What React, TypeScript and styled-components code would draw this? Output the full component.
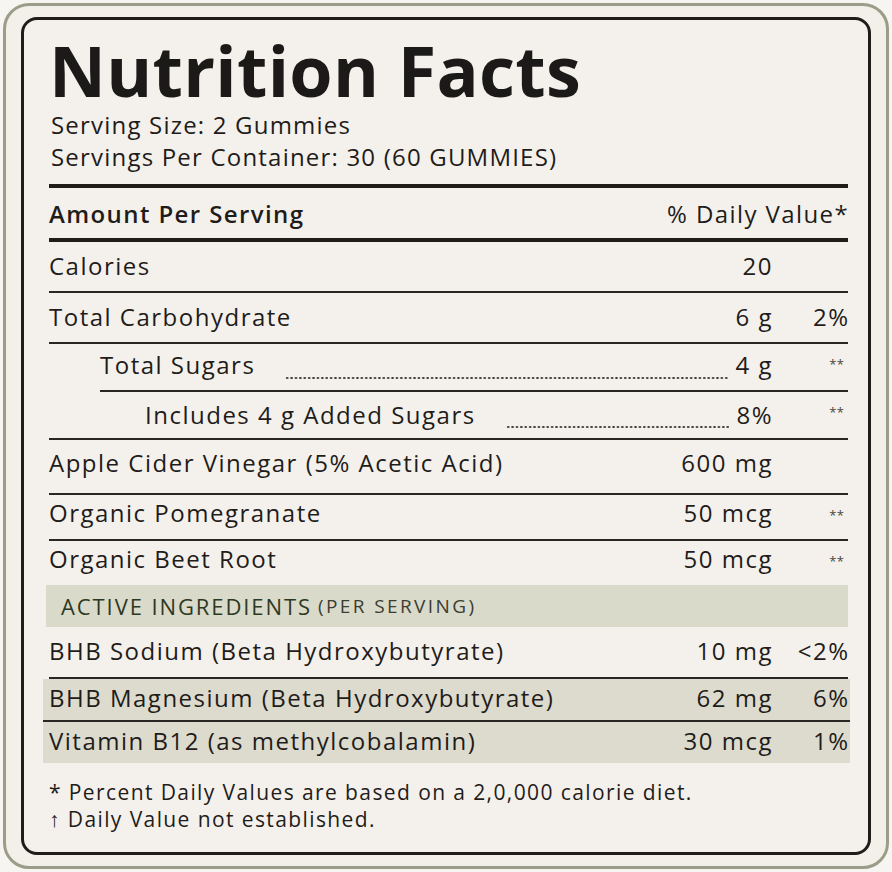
import React from "react";
import styled, { createGlobalStyle } from "styled-components";

const Global = createGlobalStyle`
  html, body { margin: 0; padding: 0; background: #f6f5f1; }
  body { font-family: "Open Sans", "Liberation Sans", sans-serif; color: #1f1c1a; }
  * { box-sizing: border-box; }
`;

const Frame = styled.div`
  margin: 3px;
  width: 886px;
  height: 866px;
  border: 3px solid #9c9d88;
  border-radius: 26px;
  background: #f3f0ea;
  padding: 11px 15px;
`;

const Card = styled.div`
  height: 100%;
  border: 3px solid #1f1c1a;
  border-radius: 16px;
  background: #f4f1ec;
  padding: 0 20px 0 25px;
  display: flex;
  flex-direction: column;
`;

const Title = styled.h1`
  margin: 14px 0 3px 0;
  font-size: 70px;
  line-height: 72px;
  font-weight: 700;
  letter-spacing: 0.3px;
  color: #1c1a18;
`;

const Serving = styled.div`
  font-size: 24px;
  line-height: 32px;
  font-weight: 400;
  letter-spacing: 1.2px;
  padding-left: 2px;
`;

const Rule = styled.div<{ $thick?: boolean; $top?: number }>`
  height: ${(p) => (p.$thick ? 4 : 2)}px;
  background: #1f1c1a;
  margin-top: ${(p) => p.$top ?? 0}px;
`;

const HeadRow = styled.div`
  height: 50px;
  display: flex;
  align-items: center;
  justify-content: space-between;
  font-size: 24px;
  letter-spacing: 1.4px;
`;

const HeadLeft = styled.span`
  font-weight: 600;
`;

const HeadRight = styled.span`
  font-weight: 500;
  margin-right: -1px;
`;

const Row = styled.div<{
  $h: number;
  $pb: number;
  $line?: boolean;
  $inset?: number;
  $shade?: boolean;
}>`
  height: ${(p) => p.$h}px;
  margin-left: ${(p) => (p.$shade ? -6 : p.$inset ?? 0)}px;
  margin-right: ${(p) => (p.$shade ? -2 : 0)}px;
  padding-left: ${(p) => (p.$shade ? 6 : 0)}px;
  padding-right: ${(p) => (p.$shade ? 2 : 0)}px;
  padding-bottom: ${(p) => p.$pb}px;
  display: flex;
  align-items: center;
  font-size: 24px;
  font-weight: 500;
  letter-spacing: 1.5px;
  border-bottom: ${(p) => (p.$line ? "2px solid #2a2623" : "none")};
  background: ${(p) => (p.$shade ? "#dcdbcd" : "transparent")};
`;

const Label = styled.span<{ $pad?: number }>`
  padding-left: ${(p) => p.$pad ?? 0}px;
  white-space: nowrap;
`;

const Spacer = styled.span`
  flex: 1;
`;

const Leader = styled.span<{ $dotY: number }>`
  flex: 1;
  align-self: stretch;
  margin: 0 7px 0 30px;
  background-image: radial-gradient(circle, #3e3a37 0.9px, transparent 1.3px);
  background-size: 4.4px 4px;
  background-repeat: repeat-x;
  background-position: left ${(p) => p.$dotY}px;
`;

const Value = styled.span`
  white-space: nowrap;
  text-align: right;
  margin-right: -1.5px;
`;

const DV = styled.span<{ $star?: boolean }>`
  width: 78px;
  text-align: right;
  white-space: nowrap;
  margin-right: -1.5px;
  ${(p) =>
    p.$star
      ? `font-size: 13px; color: #4a4542; letter-spacing: 0.5px; align-self: flex-start; padding-top: 11px; padding-right: 5px;`
      : ``}
`;

const Band = styled.div`
  height: 42px;
  margin-left: -3px;
  background: #dadacb;
  display: flex;
  align-items: center;
  padding-left: 15px;
  color: #2c3922;
`;

const BandTitle = styled.span`
  font-size: 22px;
  font-weight: 500;
  letter-spacing: 1.9px;
`;

const BandNote = styled.span`
  font-size: 19px;
  font-weight: 400;
  letter-spacing: 2.4px;
  margin-left: 6px;
  color: #3b3d30;
`;

const Footer = styled.div`
  margin-top: 16px;
  font-size: 21px;
  line-height: 27px;
  font-weight: 400;
  letter-spacing: 1.4px;
`;

type RowData = {
  label: string;
  value: string;
  dv?: string;
  h: number;
  pb: number;
  line?: boolean;
  inset?: number;
  pad?: number;
  leader?: number;
  shade?: boolean;
};

const mainRows: RowData[] = [
  { label: "Calories", value: "20", h: 51, pb: 2, line: true },
  { label: "Total Carbohydrate", value: "6 g", dv: "2%", h: 51, pb: 2, line: true },
  { label: "Total Sugars", value: "4 g", dv: "**", h: 48, pb: 6, line: true, inset: 51, leader: 32 },
  { label: "Includes 4 g Added Sugars", value: "8%", dv: "**", h: 48, pb: 2, line: true, pad: 96, leader: 33 },
  { label: "Apple Cider Vinegar (5% Acetic Acid)", value: "600 mg", h: 55, pb: 8, line: true },
  { label: "Organic Pomegranate", value: "50 mcg", dv: "**", h: 46, pb: 9, line: true },
  { label: "Organic Beet Root", value: "50 mcg", dv: "**", h: 44, pb: 9 },
];

const activeRows: RowData[] = [
  { label: "BHB Sodium (Beta Hydroxybutyrate)", value: "10 mg", dv: "<2%", h: 52, pb: 4, line: true },
  { label: "BHB Magnesium (Beta Hydroxybutyrate)", value: "62 mg", dv: "6%", h: 43, pb: 4, line: true, shade: true },
  { label: "Vitamin B12 (as methylcobalamin)", value: "30 mcg", dv: "1%", h: 41, pb: 4, shade: true },
];

function NutRow({ r }: { r: RowData }) {
  return (
    <Row $h={r.h} $pb={r.pb} $line={r.line} $inset={r.inset} $shade={r.shade}>
      <Label $pad={r.pad}>{r.label}</Label>
      {r.leader !== undefined ? <Leader $dotY={r.leader} /> : <Spacer />}
      <Value>{r.value}</Value>
      <DV $star={r.dv === "**"}>{r.dv ?? ""}</DV>
    </Row>
  );
}

export default function App() {
  return (
    <>
      <Global />
      <Frame>
        <Card>
          <Title>Nutrition Facts</Title>
          <Serving>Serving Size: 2 Gummies</Serving>
          <Serving>Servings Per Container: 30 (60 GUMMIES)</Serving>
          <Rule $thick $top={11} />
          <HeadRow>
            <HeadLeft>Amount Per Serving</HeadLeft>
            <HeadRight>% Daily Value*</HeadRight>
          </HeadRow>
          <Rule $thick />
          {mainRows.map((r) => (
            <NutRow key={r.label} r={r} />
          ))}
          <Band>
            <BandTitle>ACTIVE INGREDIENTS</BandTitle>
            <BandNote>(PER SERVING)</BandNote>
          </Band>
          {activeRows.map((r) => (
            <NutRow key={r.label} r={r} />
          ))}
          <Footer>
            * Percent Daily Values are based on a 2,0,000 calorie diet.
            <br />↑ Daily Value not established.
          </Footer>
        </Card>
      </Frame>
    </>
  );
}
